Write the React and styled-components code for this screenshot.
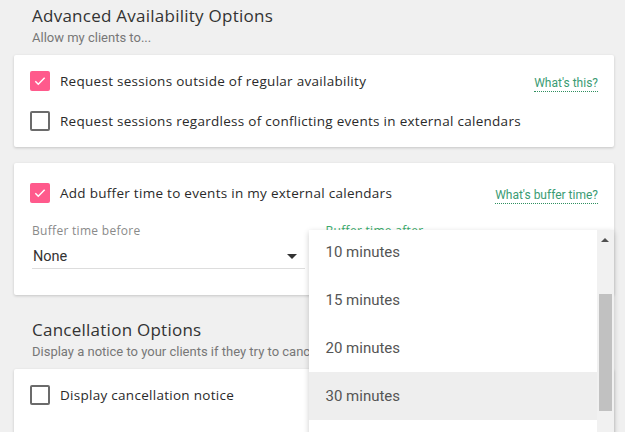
import React from 'react';
import styled, { createGlobalStyle } from 'styled-components';

const GlobalStyle = createGlobalStyle`
  html, body {
    margin: 0;
    padding: 0;
    background: #f0f0f0;
  }
  body {
    font-family: "Open Sans", "DejaVu Sans", sans-serif;
    overflow: hidden;
  }
`;

const Page = styled.div`
  width: 600px;
  padding: 6px 11px 0 14px;
  display: flex;
  flex-direction: column;
`;

const SectionHeader = styled.div`
  padding-left: 18px;
  margin-top: ${props => props.first ? '0' : '25px'};
  margin-bottom: 9px;
`;

const Title = styled.div`
  font-family: "Open Sans", sans-serif;
  font-size: 17px;
  line-height: 20px;
  color: #333;
  letter-spacing: 0.25px;
`;

const Subtitle = styled.div`
  margin-top: 4px;
  font-family: Roboto, sans-serif;
  font-size: 13px;
  line-height: 16px;
  color: #777;
  white-space: nowrap;
`;

const Card = styled.div`
  background: #fff;
  border-radius: 2px;
  box-shadow: 0 1px 3px rgba(0, 0, 0, 0.18);
  padding: ${props => props.pad || '6px 16px'};
  margin-bottom: ${props => props.gap ? '16px' : '0'};
`;

const Row = styled.div`
  height: 40px;
  display: flex;
  align-items: center;
  justify-content: space-between;
`;

const CheckLabel = styled.label`
  display: flex;
  align-items: center;
  gap: 10px;
  font-family: "Open Sans", sans-serif;
  font-size: 13.5px;
  color: #2a2a2a;
  letter-spacing: 0.28px;
`;

const Box = styled.span`
  width: 20px;
  height: 20px;
  box-sizing: border-box;
  border-radius: 2px;
  border: ${props => props.checked ? 'none' : '2px solid #6b6b6b'};
  background: ${props => props.checked ? '#ff5a8c' : '#fff'};
  display: flex;
  align-items: center;
  justify-content: center;
  flex-shrink: 0;
`;

const HelpLink = styled.a`
  font-family: Roboto, sans-serif;
  font-size: 12px;
  line-height: 15px;
  color: #3a9b73;
  text-decoration: none;
  border-bottom: 1px dotted #2f8f5f;
  margin-top: 5px;
`;

const Fields = styled.div`
  display: grid;
  grid-template-columns: 1fr 1fr;
  column-gap: 21px;
  padding: 0 0 0 2px;
  margin-top: 10px;
`;

const Field = styled.div`
  position: relative;
  display: flex;
  flex-direction: column;
`;

const FieldLabel = styled.div`
  font-family: "Open Sans", sans-serif;
  font-size: 12px;
  line-height: 16px;
  color: ${props => props.active ? '#3aaa6a' : '#8a8a8a'};
  letter-spacing: 0.3px;
`;

const SelectBox = styled.div`
  display: flex;
  align-items: center;
  justify-content: space-between;
  height: 20px;
  margin-top: 7px;
  padding: 0 0 2px 1px;
  border-bottom: 1px solid #ddd;
  font-family: Roboto, sans-serif;
  font-size: 14.5px;
  color: #333;
`;

const Caret = styled.span`
  width: 0;
  height: 0;
  border-left: 5px solid transparent;
  border-right: 5px solid transparent;
  border-top: 5px solid #333;
  margin-right: 8px;
`;

const Menu = styled.div`
  position: absolute;
  left: -17px;
  top: 7px;
  width: 305px;
  height: 240px;
  background: #fff;
  box-shadow: 0 2px 6px rgba(0, 0, 0, 0.2);
  overflow: hidden;
  display: flex;
  z-index: 10;
`;

const MenuList = styled.div`
  flex: 1;
  margin-top: -2px;
`;

const MenuItem = styled.div`
  height: 48px;
  display: flex;
  align-items: center;
  padding-left: 17px;
  font-family: Roboto, sans-serif;
  font-size: 15px;
  color: #555;
  background: ${props => props.selected ? '#eeeeee' : '#fff'};
`;

const ScrollTrack = styled.div`
  width: 17px;
  background: #f1f1f1;
  display: flex;
  flex-direction: column;
  align-items: center;
`;

const ScrollArrow = styled.span`
  margin-top: 8px;
  width: 0;
  height: 0;
  border-left: 4px solid transparent;
  border-right: 4px solid transparent;
  border-bottom: 4px solid #505050;
`;

const ScrollThumb = styled.div`
  width: 13px;
  height: 117px;
  margin-top: 52px;
  background: #c1c1c1;
`;

const Check = () => (
  <svg width="14" height="14" viewBox="0 0 24 24">
    <path d="M4 12.5l5 5L20 6.5" fill="none" stroke="#fff" strokeWidth="2.6" />
  </svg>
);

const Checkbox = ({ checked, children }) => (
  <CheckLabel>
    <Box checked={checked}>{checked && <Check />}</Box>
    {children}
  </CheckLabel>
);

const options = ['10 minutes', '15 minutes', '20 minutes', '30 minutes', '45 minutes'];

export default function App() {
  return (
    <>
      <GlobalStyle />
      <Page>
        <SectionHeader first>
          <Title>Advanced Availability Options</Title>
          <Subtitle>Allow my clients to...</Subtitle>
        </SectionHeader>
        <Card gap>
          <Row>
            <Checkbox checked>Request sessions outside of regular availability</Checkbox>
            <HelpLink>What's this?</HelpLink>
          </Row>
          <Row>
            <Checkbox>Request sessions regardless of conflicting events in external calendars</Checkbox>
          </Row>
        </Card>
        <Card pad="10px 16px 26px">
          <Row>
            <Checkbox checked>Add buffer time to events in my external calendars</Checkbox>
            <HelpLink>What's buffer time?</HelpLink>
          </Row>
          <Fields>
            <Field>
              <FieldLabel>Buffer time before</FieldLabel>
              <SelectBox>
                None
                <Caret />
              </SelectBox>
            </Field>
            <Field>
              <FieldLabel active>Buffer time after</FieldLabel>
              <SelectBox>
                <span />
                <Caret />
              </SelectBox>
              <Menu>
                <MenuList>
                  {options.map(o => (
                    <MenuItem key={o} selected={o === '30 minutes'}>{o}</MenuItem>
                  ))}
                </MenuList>
                <ScrollTrack>
                  <ScrollArrow />
                  <ScrollThumb />
                </ScrollTrack>
              </Menu>
            </Field>
          </Fields>
        </Card>
        <SectionHeader>
          <Title>Cancellation Options</Title>
          <Subtitle>Display a notice to your clients if they try to cancel a session within a certain time frame</Subtitle>
        </SectionHeader>
        <Card>
          <Row>
            <Checkbox>Display cancellation notice</Checkbox>
          </Row>
          <Row />
        </Card>
      </Page>
    </>
  );
}
